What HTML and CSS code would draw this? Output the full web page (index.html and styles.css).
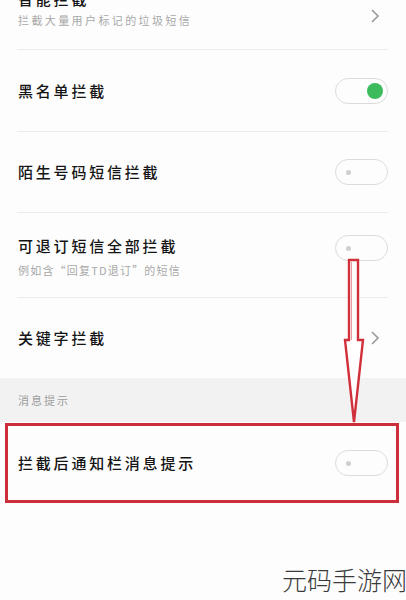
FILE: index.html
```html
<!DOCTYPE html>
<html lang="zh">
<head>
<meta charset="utf-8">
<link rel="stylesheet" href="styles.css">
</head>
<body>
<div class="page">
  <div class="list">
    <div class="row row-first">
      <div class="texts">
        <div class="title">智能拦截</div>
        <div class="sub">拦截大量用户标记的垃圾短信</div>
      </div>
      <svg class="chev" width="10" height="16" viewBox="0 0 10 16"><path d="M2 2 L8 8 L2 14" fill="none" stroke="#9a9a9a" stroke-width="1.6"/></svg>
    </div>
    <div class="row r2">
      <div class="title">黑名单拦截</div>
      <div class="toggle on"><span class="knob"></span></div>
    </div>
    <div class="row r3">
      <div class="title">陌生号码短信拦截</div>
      <div class="toggle"><span class="dot"></span></div>
    </div>
    <div class="row r4">
      <div class="texts">
        <div class="title">可退订短信全部拦截</div>
        <div class="sub">例如含“回复TD退订”的短信</div>
      </div>
      <div class="toggle"><span class="dot"></span></div>
    </div>
    <div class="row r5 last">
      <div class="title">关键字拦截</div>
      <svg class="chev" width="10" height="16" viewBox="0 0 10 16"><path d="M2 2 L8 8 L2 14" fill="none" stroke="#9a9a9a" stroke-width="1.6"/></svg>
    </div>
    <div class="section">消息提示</div>
    <div class="row r6 last">
      <div class="title">拦截后通知栏消息提示</div>
      <div class="toggle"><span class="dot"></span></div>
    </div>
  </div>
  <svg class="annot" width="406" height="600" viewBox="0 0 406 600">
    <polygon points="349,260 358,260 358,340 363,340 354,422 345,340 349,340" fill="#ffffff" stroke="#d1303b" stroke-width="2.4" stroke-linejoin="miter"/>
    <line x1="351.5" y1="262" x2="351.5" y2="340" stroke="#d1303b" stroke-width="0.8" opacity="0.6"/>
    <rect x="6.5" y="424.5" width="391" height="77" fill="none" stroke="#cc2f3a" stroke-width="3"/>
  </svg>
  <div class="watermark">元码手游网</div>
</div>
</body>
</html>
```
FILE: styles.css
```css
html, body {
  margin: 0;
  padding: 0;
  background: #fdfdfd;
}
body {
  font-family: "Noto Sans CJK SC", "Noto Sans", sans-serif;
}
.page {
  position: relative;
  width: 406px;
  height: 600px;
  overflow: hidden;
  background: #fdfdfd;
}
.list {
  display: flex;
  flex-direction: column;
}
.row {
  display: flex;
  align-items: center;
  justify-content: space-between;
  margin: 0 18px 0 17px;
  padding-left: 1px;
  border-bottom: 1px solid #ececec;
  box-sizing: border-box;
}
.row.last {
  border-bottom: none;
}
.row-first {
  height: 72px;
  margin-top: -22px;
  align-items: flex-start;
  padding-top: 10px;
}
.row-first .chev {
  margin-top: 20px;
  margin-right: 8px;
}
.r2 { height: 82px; }
.r3 { height: 81px; }
.r4 { height: 85px; }
.r5 { height: 80px; }
.r6 { height: 80px; margin-top: 1px; }
.r5 .chev { margin-right: 8px; }
.texts {
  display: flex;
  flex-direction: column;
}
.title {
  font-size: 15px;
  letter-spacing: 2.8px;
  color: #141414;
  line-height: 22px;
  font-weight: 500;
}
.sub {
  font-size: 11px;
  letter-spacing: 2.4px;
  color: #a8a8a8;
  line-height: 16px;
  margin-top: 2px;
}
.r4 .texts { margin-top: 3px; }
.r4 .sub { letter-spacing: 1.2px; margin-top: 5px; }
.toggle {
  width: 53px;
  height: 26px;
  border: 1.5px solid #dcdcdc;
  border-radius: 14px;
  box-sizing: border-box;
  display: flex;
  align-items: center;
  background: #fdfdfd;
}
.r4 .toggle { margin-top: -14px; }
.toggle.on {
  justify-content: flex-end;
  padding-right: 4px;
}
.knob {
  width: 16px;
  height: 16px;
  border-radius: 50%;
  background: #3bbb5c;
}
.dot {
  width: 5px;
  height: 5px;
  border-radius: 50%;
  background: #cfcfcf;
  margin-left: 10px;
}
.section {
  height: 44px;
  background: #f2f2f2;
  color: #9c9c9c;
  font-size: 11px;
  letter-spacing: 2px;
  display: flex;
  align-items: center;
  padding-left: 18px;
}
.annot {
  position: absolute;
  left: 0;
  top: 0;
  pointer-events: none;
}
.watermark {
  position: absolute;
  right: -1px;
  top: 563px;
  font-size: 25px;
  font-weight: 300;
  color: #3a3a3a;
  letter-spacing: 0;
  line-height: 32px;
}
```
